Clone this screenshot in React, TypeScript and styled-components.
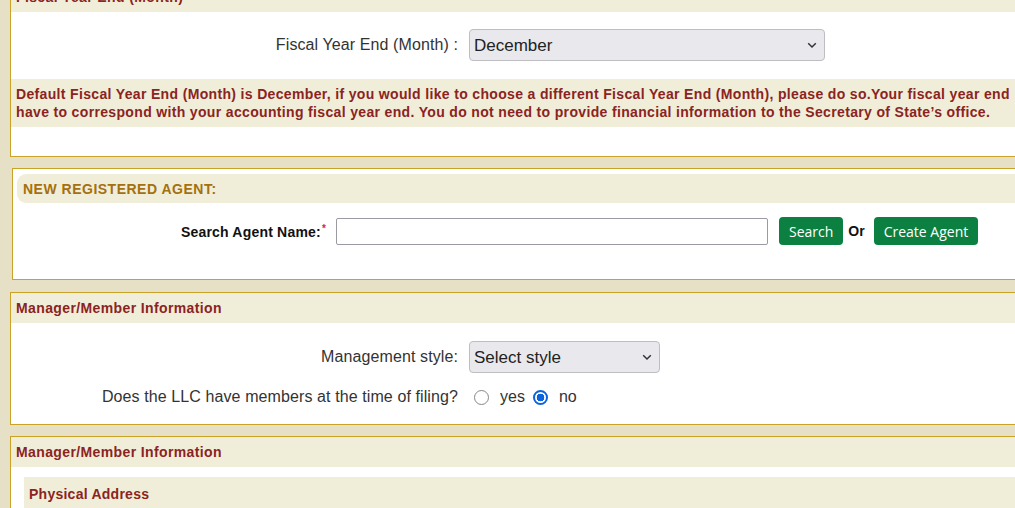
import React from "react";
import styled, { createGlobalStyle } from "styled-components";

const GlobalStyle = createGlobalStyle`
  html, body {
    margin: 0;
    padding: 0;
    background: #e6e0c6;
    overflow: hidden;
    font-family: "Liberation Sans", Arial, sans-serif;
  }
`;

const Page = styled.div`
  width: 1040px;
  margin-top: -19px;
  padding-left: 10px;
  display: flex;
  flex-direction: column;
  gap: 11px;
`;

const Panel = styled.section<{ $indent?: number; $pad?: string; $mt?: number }>`
  margin-left: ${(p) => p.$indent ?? 0}px;
  margin-top: ${(p) => p.$mt ?? 0}px;
  border: 1px solid #c9a227;
  background: #ffffff;
  padding: ${(p) => p.$pad ?? "0"};
`;

const PanelHeader = styled.div`
  height: 30px;
  background: #f0eed8;
  padding: 0 5px;
  display: flex;
  align-items: center;
  font-weight: bold;
  font-size: 14px;
  letter-spacing: 0.38px;
  color: #8b2323;
`;

const AgentHeader = styled.div`
  height: 29px;
  background: #f0eed8;
  border-radius: 9px;
  padding: 0 6px;
  display: flex;
  align-items: center;
  font-weight: bold;
  font-size: 14px;
  letter-spacing: 0.5px;
  color: #a5700f;
`;

const FormRow = styled.div<{ $top: number }>`
  display: grid;
  grid-template-columns: 447px 1fr;
  column-gap: 11px;
  align-items: center;
  margin-top: ${(p) => p.$top}px;
`;

const Label = styled.label`
  text-align: right;
  font-size: 16px;
  letter-spacing: 0.1px;
  color: #333333;
`;

const SelectBox = styled.div<{ $width: number }>`
  position: relative;
  width: ${(p) => p.$width}px;
  height: 32px;
`;

const NativeSelect = styled.select`
  appearance: none;
  -webkit-appearance: none;
  width: 100%;
  height: 100%;
  box-sizing: border-box;
  background: #e9e9ed;
  border: 1px solid #bdbdc2;
  border-radius: 4px;
  padding: 0 0 0 4px;
  font-family: "Liberation Sans", Arial, sans-serif;
  font-size: 17px;
  color: #222222;
  outline: none;
`;

const Chevron = styled.svg`
  position: absolute;
  right: 8px;
  top: 13px;
  pointer-events: none;
`;

const Notice = styled.p`
  margin: 18px 0 0;
  background: #f0eed8;
  padding: 6px 5px;
  font-weight: bold;
  font-size: 14px;
  line-height: 18px;
  letter-spacing: 0.34px;
  color: #8b2323;
`;

const Spacer = styled.div<{ $h: number }>`
  height: ${(p) => p.$h}px;
`;

const SearchRow = styled.div`
  display: grid;
  grid-template-columns: 309px auto;
  column-gap: 10px;
  align-items: center;
  margin-top: 14px;
`;

const BoldLabel = styled.label`
  text-align: right;
  font-weight: bold;
  font-size: 14px;
  letter-spacing: 0.2px;
  color: #111111;
`;

const Required = styled.span`
  color: #e0252b;
  font-size: 10px;
  vertical-align: 5px;
  margin-left: 1px;
`;

const Controls = styled.div`
  display: flex;
  align-items: center;
`;

const TextInput = styled.input`
  width: 432px;
  height: 27px;
  box-sizing: border-box;
  border: 1px solid #9a9aa2;
  border-radius: 2px;
  padding: 0 4px;
  font-size: 14px;
  outline: none;
`;

const GreenButton = styled.button<{ $ml: number }>`
  margin-left: ${(p) => p.$ml}px;
  height: 28px;
  padding: 0 10px;
  background: #0b8040;
  color: #ffffff;
  border: none;
  border-radius: 4px;
  font-family: "Open Sans", "Segoe UI", sans-serif;
  font-size: 14px;
  cursor: pointer;
`;

const OrText = styled.span`
  margin-left: 5px;
  font-weight: bold;
  font-size: 14px;
  color: #111111;
`;

const RadioGroup = styled.div`
  display: flex;
  align-items: center;
  font-size: 16px;
  color: #333333;
`;

const Radio = styled.input`
  appearance: none;
  -webkit-appearance: none;
  box-sizing: border-box;
  flex: 0 0 15px;
  width: 15px;
  height: 15px;
  margin: 0;
  border-radius: 50%;
  border: 1.5px solid #85858d;
  background: #ffffff;

  &:checked {
    border: 2px solid #0b63de;
    background: radial-gradient(circle, #0b63de 0 3.6px, #ffffff 4.1px);
  }
`;

const RadioOption = styled.label<{ $ml: number }>`
  display: flex;
  align-items: center;
  gap: 11px;
  margin-left: ${(p) => p.$ml}px;
`;

const SubBand = styled.div`
  margin: 10px 13px 0;
  height: 34px;
  background: #f0eed8;
  padding: 0 5px;
  display: flex;
  align-items: center;
  font-weight: bold;
  font-size: 14px;
  letter-spacing: 0.25px;
  color: #8b2323;
`;

const ChevronIcon = () => (
  <Chevron width="10" height="7" viewBox="0 0 10 7">
    <path d="M1.2 1.3 L5 5 L8.8 1.3" fill="none" stroke="#333" strokeWidth="1.5" />
  </Chevron>
);

export default function App() {
  return (
    <>
      <GlobalStyle />
      <Page>
        <Panel $pad="0 0 29px">
          <PanelHeader>Fiscal Year End (Month)</PanelHeader>
          <FormRow $top={17}>
            <Label>Fiscal Year End (Month) :</Label>
            <SelectBox $width={356}>
              <NativeSelect defaultValue="December">
                <option>January</option>
                <option>December</option>
              </NativeSelect>
              <ChevronIcon />
            </SelectBox>
          </FormRow>
          <Notice>
            Default Fiscal Year End (Month) is December, if you would like to choose a different Fiscal Year End
            (Month), please do so.Your fiscal year end have to correspond with your accounting fiscal year end. You
            do not need to provide financial information to the Secretary of State’s office.
          </Notice>
        </Panel>

        <Panel $indent={2} $pad="5px 0 34px 4px">
          <AgentHeader>NEW REGISTERED AGENT:</AgentHeader>
          <SearchRow>
            <BoldLabel>
              Search Agent Name:<Required>*</Required>
            </BoldLabel>
            <Controls>
              <TextInput type="text" />
              <GreenButton $ml={11}>Search</GreenButton>
              <OrText>Or</OrText>
              <GreenButton $ml={9}>Create Agent</GreenButton>
            </Controls>
          </SearchRow>
        </Panel>

        <Panel $pad="0 0 18px" $mt={1}>
          <PanelHeader>Manager/Member Information</PanelHeader>
          <FormRow $top={18}>
            <Label>Management style:</Label>
            <SelectBox $width={191}>
              <NativeSelect defaultValue="Select style">
                <option>Select style</option>
                <option>Manager-managed</option>
                <option>Member-managed</option>
              </NativeSelect>
              <ChevronIcon />
            </SelectBox>
          </FormRow>
          <FormRow $top={15}>
            <Label>Does the LLC have members at the time of filing?</Label>
            <RadioGroup>
              <RadioOption $ml={5}>
                <Radio type="radio" name="members" />
                yes
              </RadioOption>
              <RadioOption $ml={8}>
                <Radio type="radio" name="members" defaultChecked />
                no
              </RadioOption>
            </RadioGroup>
          </FormRow>
        </Panel>

        <Panel>
          <PanelHeader>Manager/Member Information</PanelHeader>
          <SubBand>Physical Address</SubBand>
          <Spacer $h={40} />
        </Panel>
      </Page>
    </>
  );
}
